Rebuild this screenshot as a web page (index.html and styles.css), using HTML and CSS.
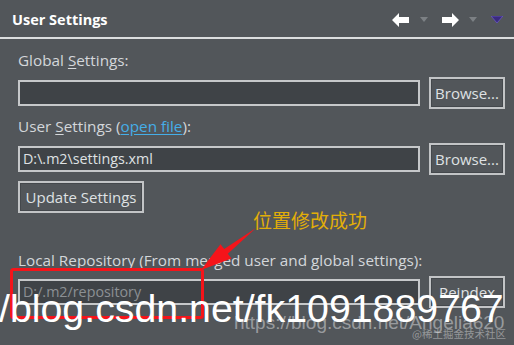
FILE: index.html
```html
<!DOCTYPE html>
<html lang="en">
<head>
  <meta charset="UTF-8">
  <title>User Settings</title>
  <link rel="stylesheet" href="styles.css">
</head>
<body>
  <!-- Panel -->
  <div class="panel">
    <div class="panel-head">
      <h1>User Settings</h1>
      <div class="nav">
        <svg class="nav-arrow" width="18" height="14" viewBox="0 0 18 14"><polygon points="0,7 7,0 7,4 17,4 17,10 7,10 7,14" fill="#fff"/></svg>
        <svg class="nav-drop" width="8" height="5" viewBox="0 0 8 5"><polygon points="0,0 8,0 4,5" fill="#7c8084"/></svg>
        <svg class="nav-arrow" width="18" height="14" viewBox="0 0 18 14"><polygon points="18,7 11,0 11,4 1,4 1,10 11,10 11,14" fill="#fff"/></svg>
        <svg class="nav-drop" width="8" height="5" viewBox="0 0 8 5"><polygon points="0,0 8,0 4,5" fill="#7c8084"/></svg>
        <svg class="nav-menu" width="12" height="7" viewBox="0 0 12 7"><polygon points="0,0 12,0 6,7" fill="#3a2a80" stroke="#6a58c0" stroke-width="0.8"/></svg>
      </div>
    </div>

    <div class="panel-body">
      <div class="field-label">Global <u>S</u>ettings:</div>
      <div class="field-row">
        <div class="field"></div>
        <div class="btn">Browse...</div>
      </div>

      <div class="field-label">User <u>S</u>ettings (<a class="link">open file</a>):</div>
      <div class="field-row">
        <div class="field">D:\.m2\settings.xml</div>
        <div class="btn">Browse...</div>
      </div>

      <div class="btn btn-update">Update Settings</div>

      <div class="field-label label-repo">Local Repository (From merged user and global settings):</div>
      <div class="field-row">
        <div class="field field-disabled">D:/.m2/repository</div>
        <div class="btn">Reindex</div>
      </div>
    </div>
  </div>

  <!-- Пометки поверх скриншота -->
  <div class="note">位置修改成功</div>
  <svg class="marks" width="514" height="345" viewBox="0 0 514 345">
    <rect x="11.5" y="269.5" width="191" height="48" rx="2" fill="none" stroke="#f5141a" stroke-width="3"/>
    <polygon points="256,228 227.8,253.7 231.5,258.4 201,270 220.5,244.2 224.2,248.9" fill="#f5141a"/>
  </svg>

  <div class="wm-big">/blog.csdn.net/fk1091889767</div>
  <div class="wm-small">https://blog.csdn.net/Angelia620</div>
  <div class="wm-tag">@稀土掘金技术社区</div>
</body>
</html>
```

FILE: styles.css
```css
body {
  margin: 0;
  background: #52565a;
  font-family: 'Open Sans', 'Noto Sans', sans-serif;
  color: #d4d7da;
  width: 514px;
  height: 345px;
  overflow: hidden;
  position: relative;
}

.panel-head {
  display: flex;
  align-items: center;
  justify-content: space-between;
  height: 37px;
  padding: 0 11px 0 12px;
  border-bottom: 2px solid #dcdedf;
}

.panel-head h1 {
  margin: 0;
  font-size: 14.5px;
  font-weight: bold;
  color: #fff;
  padding-top: 1px;
}

.nav {
  display: flex;
  align-items: center;
  padding-top: 2px;
}

.nav-arrow {
  margin-left: 13px;
}

.nav-drop {
  margin-left: 10px;
}

.nav-menu {
  width: 12px;
  height: 7px;
  margin-left: 14px;
}

.panel-body {
  padding: 12px 9px 0 18px;
}

.field-label {
  font-size: 15.3px;
  line-height: 18px;
  height: 18px;
  margin-bottom: 8px;
  white-space: nowrap;
}

.field-label u {
  text-decoration-thickness: 1px;
  text-underline-offset: 2px;
}

.link {
  color: #45aee8;
  text-decoration: underline;
  text-underline-offset: 2px;
}

.field-row {
  display: flex;
  align-items: center;
  gap: 9px;
  height: 32px;
  margin-bottom: 8px;
}

.field {
  flex: 1;
  height: 22px;
  border: 2px solid #c6c8ca;
  background: #3f4347;
  font-size: 14.3px;
  line-height: 22px;
  padding: 0 3px;
  color: #dfe1e3;
}

.field-disabled {
  color: #8c9094;
}

.btn {
  box-sizing: border-box;
  width: 76px;
  height: 32px;
  border: 2px solid #c2c4c6;
  box-shadow: inset 0 0 0 1px #44484c;
  font-size: 15px;
  line-height: 28px;
  text-align: center;
  color: #dfe1e3;
  white-space: nowrap;
}

.btn-update {
  width: 126px;
  margin-top: -2px;
  margin-bottom: 38px;
}

.label-repo {
  margin-bottom: 7px;
}

.note {
  position: absolute;
  left: 253px;
  top: 207px;
  font-family: 'Noto Sans CJK SC', sans-serif;
  font-size: 19px;
  line-height: 26px;
  color: #e2ae08;
}

.marks {
  position: absolute;
  left: 0;
  top: 0;
}

.wm-big {
  position: absolute;
  left: -1px;
  top: 289px;
  font-family: 'Liberation Sans', Arial, sans-serif;
  font-size: 39.3px;
  line-height: 39px;
  color: #fff;
  white-space: nowrap;
}

.wm-small {
  position: absolute;
  left: 234px;
  top: 313px;
  font-family: 'Liberation Sans', Arial, sans-serif;
  font-size: 19px;
  line-height: 20px;
  color: rgba(255, 255, 255, 0.42);
  white-space: nowrap;
}

.wm-tag {
  position: absolute;
  left: 412px;
  top: 327px;
  font-family: 'Noto Sans CJK SC', sans-serif;
  font-size: 10.5px;
  line-height: 14px;
  color: rgba(255, 255, 255, 0.4);
  white-space: nowrap;
}
```
